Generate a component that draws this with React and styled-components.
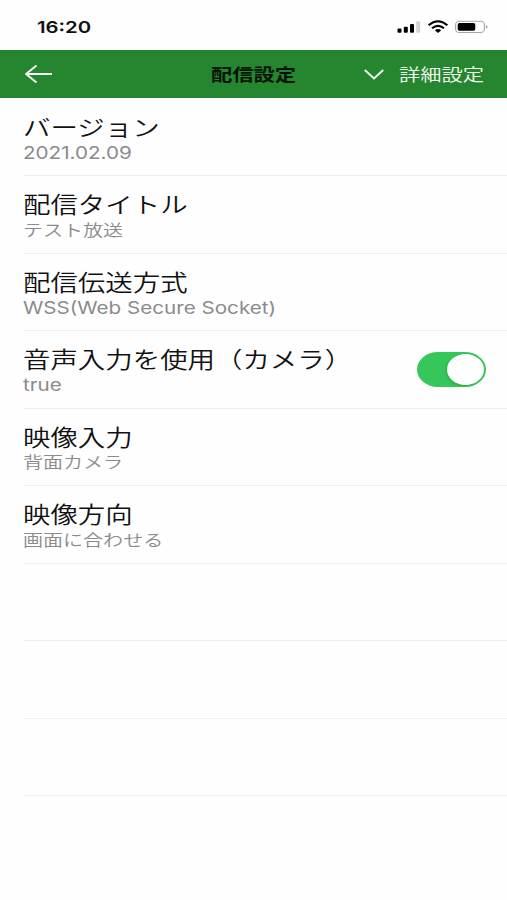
import { useState } from 'react';
import styled, { createGlobalStyle } from 'styled-components';

const GlobalStyle = createGlobalStyle`
  body {
    margin: 0;
    background: #fefefe;
    font-family: Inter, 'Noto Sans CJK JP', sans-serif;
  }
`;

const Screen = styled.div`
  width: 100%;
  height: 900px;
  overflow: hidden;
  background: #fefefe;
`;

const StatusBar = styled.div`
  height: 50px;
  box-sizing: border-box;
  padding: 3px 18px 0 37px;
  display: flex;
  justify-content: space-between;
  align-items: center;
`;

const Wide = styled.span`
  display: block;
  white-space: nowrap;
  transform: scaleX(${(p) => p.$stretch || 1.23});
  transform-origin: ${(p) => p.$origin || 'left'} center;
`;

const Time = styled(Wide)`
  font-size: 16.5px;
  font-weight: 600;
  color: #111;
`;

const StatusIcons = styled.div`
  display: flex;
  align-items: center;

  svg {
    display: block;
  }
`;

const Header = styled.header`
  height: 48.4px;
  box-sizing: border-box;
  padding: 0 23px 0 24px;
  display: grid;
  grid-template-columns: 1fr auto 1fr;
  align-items: center;
  background: #26862f;
`;

const IconButton = styled.button`
  display: flex;
  padding: 0;
  border: 0;
  background: none;
  justify-self: start;
`;

const HeaderTitle = styled(Wide)`
  padding-top: 1px;
  font-size: 17.3px;
  line-height: 24px;
  font-weight: 700;
  color: #051406;
`;

const DetailButton = styled.button`
  display: flex;
  align-items: center;
  justify-self: end;
  gap: 31px;
  padding: 0;
  border: 0;
  background: none;
  font-family: inherit;
  color: #f2faf2;
`;

const DetailText = styled(Wide)`
  padding-top: 1px;
  font-size: 17.3px;
  line-height: 24px;
  font-weight: 350;
`;

const List = styled.ul`
  margin: 0;
  padding: 0.6px 0 0 23px;
  list-style: none;
`;

const Row = styled.li`
  height: 77.5px;
  box-sizing: border-box;
  padding: 13px 21px 0 0;
  display: flex;
  justify-content: space-between;
  border-bottom: 1.5px solid #efefef;
`;

const RowTitle = styled(Wide)`
  font-family: 'Noto Sans CJK JP', sans-serif;
  font-size: 22.3px;
  line-height: 28px;
  font-weight: 350;
  color: #111;
`;

const RowValue = styled(Wide)`
  margin-top: ${(p) => (p.$latin ? '2px' : '1.4px')};
  font-size: ${(p) => (p.$latin ? '17.2px' : '16.3px')};
  line-height: 22px;
  font-weight: ${(p) => (p.$latin ? 400 : 350)};
  color: #8b8b8b;
`;

const Switch = styled.button`
  width: 69px;
  height: 35px;
  margin-top: 7.5px;
  padding: 2px;
  display: flex;
  justify-content: ${(p) => (p.$on ? 'flex-end' : 'flex-start')};
  border: 0;
  border-radius: 21px / 17.5px;
  background: ${(p) => (p.$on ? '#35c759' : '#e9e9ea')};
`;

const Knob = styled.span`
  width: 37px;
  height: 31px;
  border-radius: 50%;
  background: #fff;
  box-shadow: -1px 1px 3px rgba(0, 0, 0, 0.14);
`;

const SETTINGS = [
  { title: 'バージョン', value: '2021.02.09', latin: true },
  { title: '配信タイトル', value: 'テスト放送' },
  { title: '配信伝送方式', value: 'WSS(Web Secure Socket)', latin: true },
  { title: '音声入力を使用（カメラ）', value: 'true', latin: true, toggle: true },
  { title: '映像入力', value: '背面カメラ' },
  { title: '映像方向', value: '画面に合わせる' },
  { title: '', value: '' },
  { title: '', value: '' },
  { title: '', value: '' },
];

const StatusGlyphs = () => (
  <StatusIcons>
    <svg width="92" height="16" viewBox="0 0 92 16">
      <rect x="0.5" y="9.5" width="4" height="4.2" rx="1" fill="#000" />
      <rect x="6.8" y="7.7" width="4" height="6" rx="1" fill="#000" />
      <rect x="13" y="5" width="4" height="8.7" rx="1" fill="#000" />
      <rect x="19.2" y="2.3" width="4" height="11.4" rx="1" fill="#d4d4d4" />
      <g fill="none" stroke="#000" strokeWidth="2.1">
        <path d="M31.6 6.2Q41 -1.7 50.4 6.2" />
        <path d="M35 9.3Q41 4.3 47 9.3" />
      </g>
      <path d="M37.8 11.2Q41 8.8 44.2 11.2L41 13.9Z" fill="#000" />
      <rect x="58.6" y="2.3" width="28.8" height="11.2" rx="3.6" fill="none" stroke="#a6a6a6" strokeWidth="1.1" />
      <rect x="60.7" y="4" width="17.6" height="7.8" rx="1.8" fill="#000" />
      <path d="M88.9 6Q92.4 7.9 88.9 9.8Z" fill="#a6a6a6" />
    </svg>
  </StatusIcons>
);

const App = () => {
  const [audioOn, setAudioOn] = useState(true);

  return (
    <Screen>
      <GlobalStyle />
      <StatusBar>
        <Time $stretch={1.23}>16:20</Time>
        <StatusGlyphs />
      </StatusBar>
      <Header>
        <IconButton aria-label="戻る">
          <svg width="30" height="20" viewBox="0 0 30 20" fill="none" stroke="#f5fbf5" strokeWidth="1.9">
            <path d="M12.5 1.4L2 10L12.5 18.6M2 10H28" strokeLinejoin="round" />
          </svg>
        </IconButton>
        <HeaderTitle $origin="center">配信設定</HeaderTitle>
        <DetailButton>
          <svg width="20" height="11" viewBox="0 0 20 11" fill="none" stroke="currentColor" strokeWidth="1.9">
            <path d="M0.8 1L10 9.4L19.2 1" />
          </svg>
          <DetailText $origin="right">詳細設定</DetailText>
        </DetailButton>
      </Header>
      <List>
        {SETTINGS.map((item, i) => (
          <Row key={i}>
            <div>
              <RowTitle>{item.title}</RowTitle>
              <RowValue $latin={item.latin} $stretch={item.latin ? 1.2 : 1.23}>
                {item.value}
              </RowValue>
            </div>
            {item.toggle && (
              <Switch $on={audioOn} onClick={() => setAudioOn(!audioOn)} aria-label={item.title}>
                <Knob />
              </Switch>
            )}
          </Row>
        ))}
      </List>
    </Screen>
  );
};

export default App;
